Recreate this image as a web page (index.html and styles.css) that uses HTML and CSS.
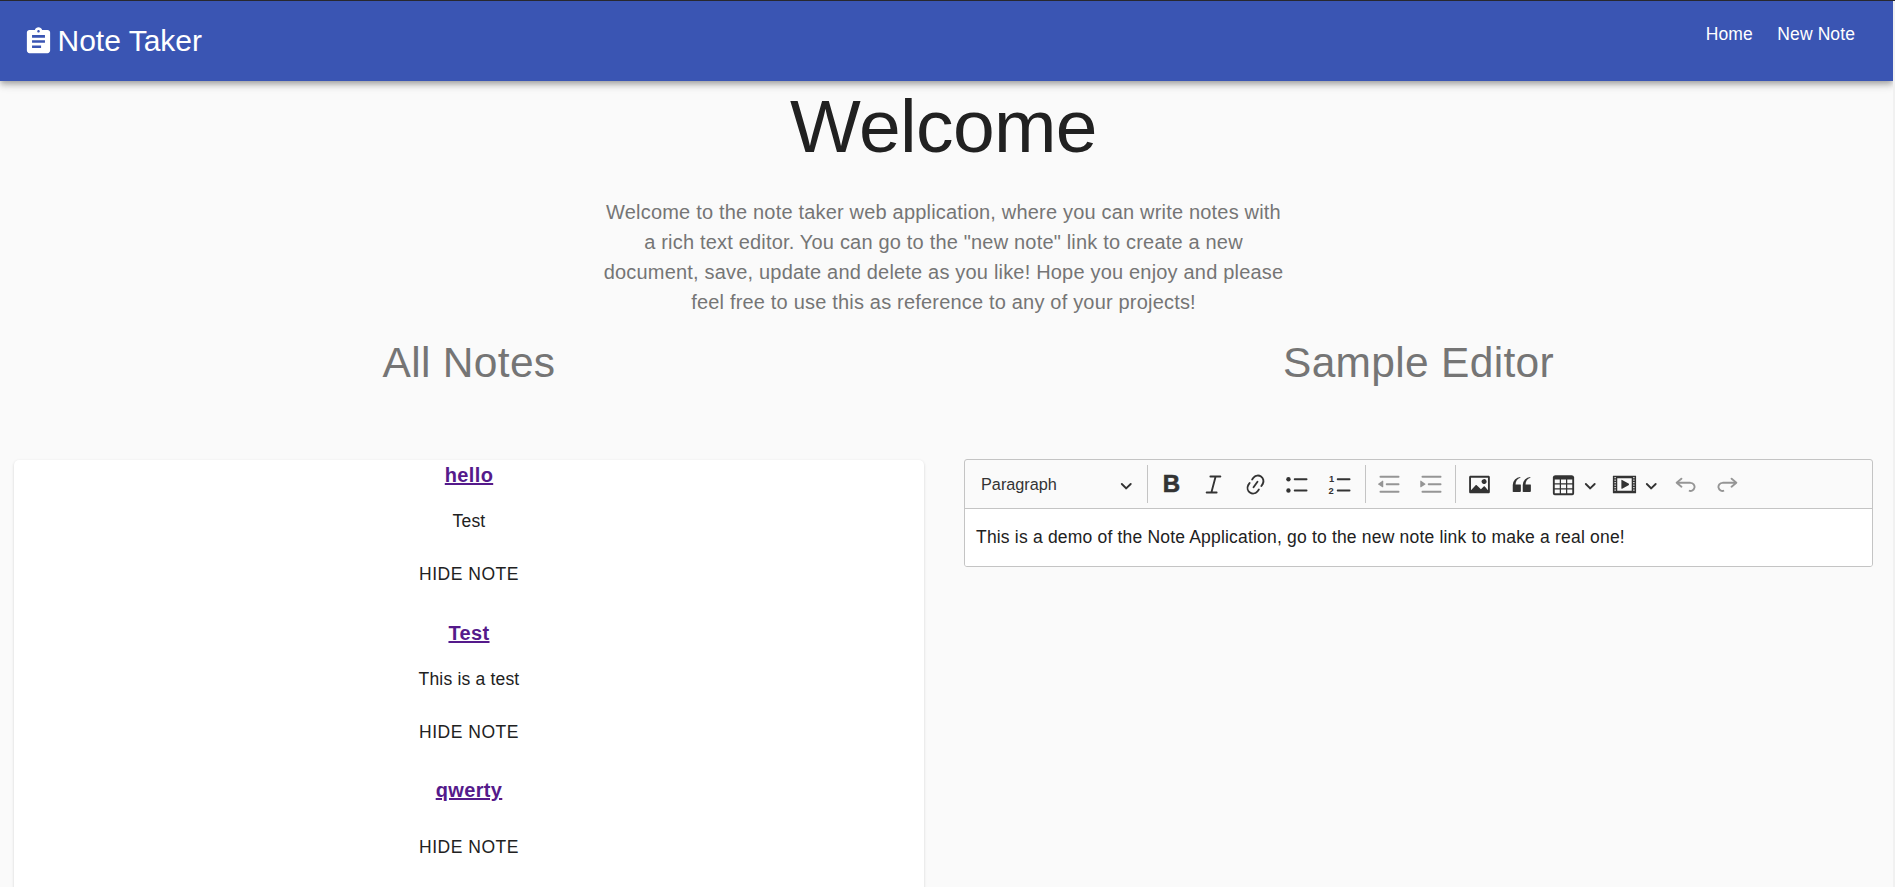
FILE: index.html
```html
<!DOCTYPE html>
<html lang="en">
<head>
<meta charset="utf-8">
<title>Note Taker</title>
<link rel="stylesheet" href="styles.css">
</head>
<body>
<div class="page">
  <header class="app-bar">
    <div class="brand">
      <svg class="brand-icon" viewBox="0 0 24 24"><path d="M19 3h-4.18C14.4 1.84 13.3 1 12 1c-1.3 0-2.4.84-2.82 2H5c-1.1 0-2 .9-2 2v14c0 1.100.9 2 2 2h14c1.100 0 2-.9 2-2V5c0-1.100-.9-2-2-2zm-7 0c.55 0 1 .45 1 1s-.45 1-1 1-1-.45-1-1 .45-1 1-1zm2 14H7v-2h7v2zm3-4H7v-2h10v2zm0-4H7V7h10v2z"/></svg>
      <span class="brand-name">Note Taker</span>
    </div>
    <nav class="nav"><a>Home</a><a>New Note</a></nav>
  </header>
  <main class="content">
    <section class="hero">
      <h1 class="hero-title">Welcome</h1>
      <p class="hero-text">Welcome to the note taker web application, where you can write notes with<br>a rich text editor. You can go to the "new note" link to create a new<br>document, save, update and delete as you like! Hope you enjoy and please<br>feel free to use this as reference to any of your projects!</p>
    </section>
    <div class="columns">
      <section class="column">
        <h2 class="column-title">All Notes</h2>
        <div class="notes">
          <article class="note"><h3 class="note-title">hello</h3><p class="note-body">Test</p><div class="note-action">HIDE NOTE</div></article>
          <article class="note"><h3 class="note-title">Test</h3><p class="note-body">This is a test</p><div class="note-action">HIDE NOTE</div></article>
          <article class="note"><h3 class="note-title">qwerty</h3><div class="note-action">HIDE NOTE</div></article>
        </div>
      </section>
      <section class="column">
        <h2 class="column-title">Sample Editor</h2>
        <div class="editor">
          <div class="toolbar">
            <div class="heading-select"><span>Paragraph</span><svg class="arrow" viewBox="0 0 10 10"><path d="M.941 4.523a.75.75 0 1 1 1.060-1.060l3.006 3.005 3.005-3.005a.75.75 0 1 1 1.060 1.060l-3.549 3.550a.75.75 0 0 1-1.168-.136L.941 4.523z"/></svg></div>
            <i class="separator"></i>
            <span class="tool bold">B</span>
            <span class="tool"><svg viewBox="0 0 20 20"><path class="line" d="M7.500 3.600h8M4.500 16.400h8M11.700 3.600L8.300 16.400"/></svg></span>
            <span class="tool"><svg viewBox="0 0 20 20"><path d="m11.077 15 .991-1.416a.75.75 0 1 1 1.229.86l-1.148 1.640a.748.748 0 0 1-.217.206 5.251 5.251 0 0 1-8.503-5.955.741.741 0 0 1 .12-.274l1.147-1.639a.75.75 0 1 1 1.228.86L4.933 10.700l.006.003a3.750 3.750 0 0 0 6.132 4.294l.006.004zm5.494-5.335a.748.748 0 0 1-.12.274l-1.147 1.639a.75.75 0 1 1-1.228-.86l.86-1.230a3.750 3.750 0 0 0-6.144-4.301l-.86 1.229a.75.75 0 0 1-1.229-.86l1.148-1.640a.748.748 0 0 1 .217-.206 5.251 5.251 0 0 1 8.503 5.955zm-4.563-2.532a.75.75 0 0 1 .184 1.045l-3.155 4.505a.75.75 0 1 1-1.229-.86l3.155-4.506a.75.75 0 0 1 1.045-.184z"/></svg></span>
            <span class="tool"><svg viewBox="0 0 20 20"><circle cx="2.75" cy="5.75" r="1.75"/><circle cx="2.75" cy="14.75" r="1.75"/><path class="line" d="M7.750 5.750h9.500M7.750 14.750h9.500"/></svg></span>
            <span class="tool"><svg viewBox="0 0 20 20"><text class="digit" x="0.8" y="8">1</text><text class="digit" x="0.3" y="17.700">2</text><path class="line" d="M7.750 5.750h9.500M7.750 14.750h9.500"/></svg></span>
            <i class="separator after-lists"></i>
            <span class="tool disabled"><svg viewBox="0 0 20 20"><path class="line" d="M2.750 3.750h14.500M7.750 9.750h9.500M2.750 15.750h14.500"/><path d="M4.368 6.950.98 9.358a.4.4 0 0 0 .013.661l3.390 2.207A.4.4 0 0 0 5 11.892V7.275a.4.4 0 0 0-.632-.326z"/></svg></span>
            <span class="tool disabled"><svg viewBox="0 0 20 20"><path class="line" d="M2.750 3.750h14.500M7.750 9.750h9.500M2.750 15.750h14.500"/><path d="M1.632 6.950 5.020 9.358a.4.4 0 0 1-.013.661l-3.390 2.207A.4.4 0 0 1 1 11.892V7.275a.4.4 0 0 1 .632-.326z"/></svg></span>
            <i class="separator after-indent"></i>
            <span class="tool"><svg viewBox="0 0 20 20"><path d="M6.910 10.540c.26-.23.64-.21.88.03l3.360 3.140 2.230-2.060a.64.64 0 0 1 .87 0l2.520 2.970V4.500H3.200v10.120l3.710-4.080zm10.270-7.510c.6 0 1.090.47 1.090 1.050v11.840c0 .59-.49 1.060-1.090 1.060H2.790c-.6 0-1.090-.47-1.090-1.060V4.080c0-.58.49-1.050 1.100-1.050h14.380zm-5.220 5.560a1.960 1.960 0 1 1 3.400-1.960 1.960 1.960 0 0 1-3.400 1.960z"/></svg></span>
            <span class="tool"><svg viewBox="0 0 20 20"><path d="M3 10.423a6.500 6.500 0 0 1 6.056-6.408l.038.67C6.448 5.423 5.354 7.663 5.220 10H9c.552 0 .5.432.5.986v4.511c0 .554-.448.503-1 .503h-5c-.552 0-.5-.449-.5-1.003v-4.574zm8 0a6.500 6.500 0 0 1 6.056-6.408l.038.67c-2.646.739-3.740 2.979-3.873 5.315H17c.552 0 .5.432.5.986v4.511c0 .554-.448.503-1 .503h-5c-.552 0-.5-.449-.5-1.003v-4.574z"/></svg></span>
            <span class="tool"><svg viewBox="0 0 20 20"><path d="M3 6v3h4V6H3zm0 4v3h4v-3H3zm0 4v3h4v-3H3zm5 3h4v-3H8v3zm5 0h4v-3h-4v3zm4-4v-3h-4v3h4zm0-4V6h-4v3h4zm1.500 8a1.500 1.500 0 0 1-1.500 1.500H3A1.500 1.500 0 0 1 1.500 17V4c.222-.863 1.068-1.500 2-1.500h13c.932 0 1.778.637 2 1.500v13zM12 13v-3H8v3h4zm0-4V6H8v3h4z"/></svg></span>
            <svg class="arrow split" viewBox="0 0 10 10"><path d="M.941 4.523a.75.75 0 1 1 1.060-1.060l3.006 3.005 3.005-3.005a.75.75 0 1 1 1.060 1.060l-3.549 3.550a.75.75 0 0 1-1.168-.136L.941 4.523z"/></svg>
            <span class="tool"><svg viewBox="0 0 20 20"><path d="M18.680 3.030c.6 0 .59-.03.59.55v12.840c0 .59.01.56-.59.56H1.290c-.6 0-.59.03-.59-.56V3.580c0-.58-.01-.55.6-.55h17.380zM15.770 15V5H4.200v10h11.570zM2 4v1h1V4H2zm0 2v1h1V6H2zm0 2v1h1V8H2zm0 2v1h1v-1H2zm0 2v1h1v-1H2zm0 2v1h1v-1H2zM17 4v1h1V4h-1zm0 2v1h1V6h-1zm0 2v1h1V8h-1zm0 2v1h1v-1h-1zm0 2v1h1v-1h-1zm0 2v1h1v-1h-1zM7.500 6.677a.4.4 0 0 1 .593-.351l5.133 2.824a.8.8 0 0 1 0 1.400l-5.133 2.824a.4.4 0 0 1-.593-.35V6.676z"/></svg></span>
            <svg class="arrow split" viewBox="0 0 10 10"><path d="M.941 4.523a.75.75 0 1 1 1.060-1.060l3.006 3.005 3.005-3.005a.75.75 0 1 1 1.060 1.060l-3.549 3.550a.75.75 0 0 1-1.168-.136L.941 4.523z"/></svg>
            <span class="tool disabled"><svg viewBox="0 0 20 20"><path d="m5.042 9.367 2.189 1.837a.75.75 0 0 1-.965 1.149l-3.788-3.180a.747.747 0 0 1-.21-.284.75.75 0 0 1 .17-.945L6.230 4.762a.75.75 0 1 1 .964 1.150L4.863 7.866h8.917A.75.75 0 0 1 14 7.900a4 4 0 1 1-1.477 7.718l.344-1.489a2.500 2.500 0 1 0 1.094-4.730l.008-.032H5.042z"/></svg></span>
            <span class="tool disabled"><svg class="mirrored" viewBox="0 0 20 20"><path d="m5.042 9.367 2.189 1.837a.75.75 0 0 1-.965 1.149l-3.788-3.180a.747.747 0 0 1-.21-.284.75.75 0 0 1 .17-.945L6.230 4.762a.75.75 0 1 1 .964 1.150L4.863 7.866h8.917A.75.75 0 0 1 14 7.900a4 4 0 1 1-1.477 7.718l.344-1.489a2.500 2.500 0 1 0 1.094-4.730l.008-.032H5.042z"/></svg></span>
          </div>
          <div class="editable">This is a demo of the Note Application, go to the new note link to make a real one!</div>
        </div>
      </section>
    </div>
  </main>
</div>
</body>
</html>
```
FILE: styles.css
```css
* { box-sizing: border-box; }
h1, h2, h3, p { margin: 0; font-weight: 400; }
body {
  margin: 0;
  height: 887px;
  overflow: hidden;
  background: #f1f1f1;
  border-top: 1px solid #28282e;
  color: #212121;
  font-family: "Liberation Sans", Arial, sans-serif;
  font-size: 17.5px;
}
.page { width: 1893px; height: 886px; overflow: hidden; background: #fafafa; }
.app-bar {
  height: 80px;
  padding: 0 38px 0 23px;
  display: flex;
  align-items: center;
  justify-content: space-between;
  background: #3a55b3;
  color: #fff;
  box-shadow: 0 2.5px 5px -1px rgba(0,0,0,.2), 0 5px 6px 0 rgba(0,0,0,.14), 0 1px 12.5px 0 rgba(0,0,0,.12);
}
.brand { display: flex; align-items: center; }
.brand-icon { width: 31px; height: 31px; fill: #fff; }
.brand-name { margin-left: 3.5px; font-size: 30px; line-height: 40px; }
.nav { display: flex; gap: 24.5px; margin-top: -14px; line-height: 25px; letter-spacing: .1px; }
.content { padding: 0 20px 0 14px; }
.hero { width: 750px; margin: 0 auto; text-align: center; transform: translateX(0); }
.hero-title { font-size: 75px; line-height: 90px; letter-spacing: -.00833em; }
.hero-text { margin-top: 26px; color: #757575; font-size: 20px; line-height: 30px; letter-spacing: .00938em; }
.columns { display: grid; grid-template-columns: 910px 909px; column-gap: 40px; }
.column-title { height: 143px; padding-top: 21px; text-align: center; color: #757575; font-size: 42.5px; line-height: 50px; letter-spacing: .00735em; }
.notes { height: 600px; background: #fff; border-radius: 5px; text-align: center; box-shadow: 0 1px 3px rgba(0,0,0,.16); }
.note { padding-bottom: 27.5px; }
.note-title { font-size: 20px; line-height: 30px; font-weight: 700; letter-spacing: .0175em; color: #551a8b; text-decoration: underline; }
.note-body { margin-top: 19px; line-height: 25px; letter-spacing: .01071em; }
.note-action { margin-top: 25px; line-height: 31px; letter-spacing: .02857em; }
.note-title + .note-action { margin-top: 27px; }
.editor { border: 1px solid #c4c4c4; border-radius: 3px; overflow: hidden; height: 108px; margin-top: -1px; }
.toolbar { height: 49px; border-bottom: 1px solid #c4c4c4; display: flex; align-items: center; fill: #333; color: #333; }
.heading-select { width: 178px; padding: 0 11px 0 16px; display: flex; align-items: center; justify-content: space-between; font-size: 16.25px; }
.arrow { width: 12.5px; height: 12.5px; margin-top: 2px; }
.split { margin: 2px 0 0 -.7px; }
.split + .tool { margin-left: 6.8px; }
.separator { width: 1px; height: 38px; margin: 0 2.3px 0 4px; background: #c4c4c4; }
.after-lists { margin-left: 3.7px; }
.after-indent { margin-left: 2.6px; }
.tool { width: 42.2px; height: 37px; display: flex; align-items: center; justify-content: center; }
.tool svg { width: 25px; height: 25px; }
.bold { font-size: 24px; font-weight: 700; -webkit-text-stroke: .6px #333; }
.line { fill: none; stroke: #333; stroke-width: 1.5; stroke-linecap: round; }
.digit { font-size: 7.5px; font-weight: 700; }
.disabled { opacity: .5; }
.mirrored { transform: scaleX(-1); }
.editable { height: 58px; padding: 15px 11px; background: #fff; line-height: 27px; letter-spacing: .01071em; }
```
